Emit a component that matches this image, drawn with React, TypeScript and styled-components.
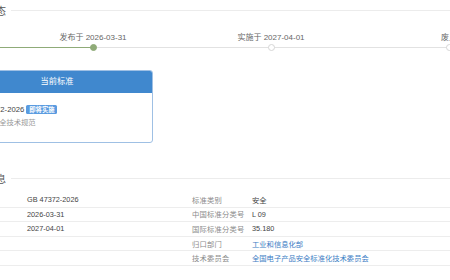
import styled, { createGlobalStyle } from "styled-components";

const GlobalStyle = createGlobalStyle`
  html, body {
    margin: 0;
    padding: 0;
    overflow: hidden;
    background: #fff;
  }
  body {
    font-family: "Liberation Sans", "Noto Sans CJK SC", sans-serif;
    color: #333;
  }
`;

type iStep = {
  label: string;
  done: boolean;
};

type iInfoRow = {
  leftLabel: string;
  leftValue: string;
  rightLabel: string;
  rightValue: string;
  isLink?: boolean;
};

const steps: iStep[] = [
  { label: "发布于 2026-03-31", done: true },
  { label: "实施于 2027-04-01", done: false },
  { label: "废止", done: false }
];

const infoRows: iInfoRow[] = [
  { leftLabel: "标准号", leftValue: "GB 47372-2026", rightLabel: "标准类别", rightValue: "安全" },
  { leftLabel: "发布日期", leftValue: "2026-03-31", rightLabel: "中国标准分类号", rightValue: "L 09" },
  { leftLabel: "实施日期", leftValue: "2027-04-01", rightLabel: "国际标准分类号", rightValue: "35.180" },
  { leftLabel: "", leftValue: "", rightLabel: "归口部门", rightValue: "工业和信息化部", isLink: true },
  { leftLabel: "", leftValue: "", rightLabel: "技术委员会", rightValue: "全国电子产品安全标准化技术委员会", isLink: true }
];

// the shot is a crop of a wider page, so the content starts left of the frame
const Page = styled.div`
  margin-left: -39px;
  width: 560px;
`;

const SectionTitle = styled.div<{ $top?: number }>`
  display: flex;
  align-items: center;
  gap: 5px;
  height: 20px;
  margin-top: ${props => props.$top || 0}px;
  padding-left: 5px;
  font-size: 10px;
  color: #555;
  &::after {
    content: "";
    flex: 1;
    height: 1px;
    background: #ececec;
  }
`;

const Timeline = styled.div`
  display: flex;
  margin-top: 12px;
  padding-left: 43px;
  background: linear-gradient(to right, #8fab78 0 132px, #e2e2e2 132px) no-repeat;
  background-size: 100% 1px;
  background-position: 0 15px;
`;

const Step = styled.div`
  flex: 0 0 178px;
  display: flex;
  flex-direction: column;
  align-items: center;
`;

const StepLabel = styled.div`
  height: 11px;
  line-height: 11px;
  font-size: 8px;
  color: #666;
  white-space: nowrap;
`;

const StepDot = styled.div<{ $done: boolean }>`
  box-sizing: border-box;
  width: 7px;
  height: 7px;
  margin-top: 1px;
  border-radius: 50%;
  background: ${props => (props.$done ? "#8fab78" : "#fff")};
  border: 1px solid ${props => (props.$done ? "#8fab78" : "#d6d6d6")};
`;

const Card = styled.div`
  box-sizing: border-box;
  width: 192px;
  height: 73px;
  margin-top: 19px;
  border: 1px solid #9fc0e4;
  border-radius: 3px;
  overflow: hidden;
`;

const CardHeader = styled.div`
  height: 22px;
  line-height: 22px;
  background: #4088ce;
  color: #fff;
  text-align: center;
  font-size: 8.2px;
`;

const CardBody = styled.div`
  padding: 10px 8px 0;
`;

const StdNo = styled.div`
  display: flex;
  align-items: center;
  height: 12px;
  font-size: 7.7px;
  color: #444;
`;

const Badge = styled.span`
  margin-left: 2px;
  padding: 0 3px;
  height: 9px;
  line-height: 9px;
  border-radius: 1.5px;
  background: #5a9be0;
  color: #fff;
  font-size: 6.3px;
  font-weight: bold;
`;

const StdName = styled.div`
  margin-top: 2px;
  height: 12px;
  line-height: 12px;
  font-size: 7.3px;
  color: #999;
`;

const Table = styled.div`
  margin-top: 5px;
`;

const Row = styled.div`
  box-sizing: border-box;
  display: grid;
  grid-template-columns: 60px 165px 60px 1fr;
  height: 14.6px;
  padding-left: 6px;
  border-bottom: 1px solid #ededed;
  align-items: center;
  font-size: 7.3px;
  white-space: nowrap;
`;

const Label = styled.div`
  color: #8a8a8a;
  letter-spacing: 0.2px;
`;

const Value = styled.div<{ $link?: boolean }>`
  color: ${props => (props.$link ? "#3b7dc4" : "#444")};
`;

const App = () => {
  return (
    <Page>
      <GlobalStyle />
      <SectionTitle>标准状态</SectionTitle>
      <Timeline>
        {steps.map(step => (
          <Step key={step.label}>
            <StepLabel>{step.label}</StepLabel>
            <StepDot $done={step.done} />
          </Step>
        ))}
      </Timeline>

      <Card>
        <CardHeader>当前标准</CardHeader>
        <CardBody>
          <StdNo>
            GB 47372-2026
            <Badge>即将实施</Badge>
          </StdNo>
          <StdName>锂电池安全技术规范</StdName>
        </CardBody>
      </Card>

      <SectionTitle $top={25}>基本信息</SectionTitle>
      <Table>
        {infoRows.map((row, index) => (
          <Row key={index}>
            <Label>{row.leftLabel}</Label>
            <Value>{row.leftValue}</Value>
            <Label>{row.rightLabel}</Label>
            <Value $link={row.isLink}>{row.rightValue}</Value>
          </Row>
        ))}
      </Table>
    </Page>
  );
};

export default App;
